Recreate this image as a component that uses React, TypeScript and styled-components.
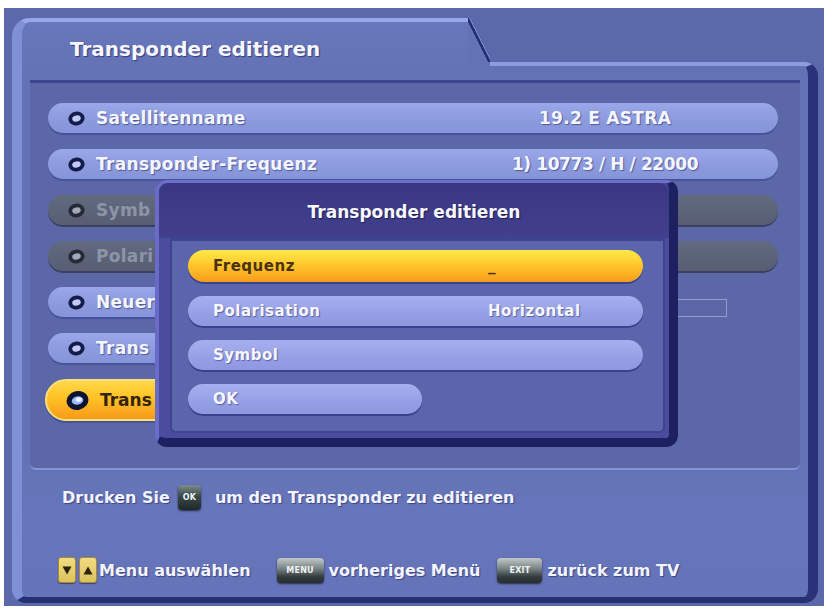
import React from "react";
import styled, { createGlobalStyle, css } from "styled-components";

const Global = createGlobalStyle`
  html, body { margin: 0; padding: 0; background: #ffffff; }
  body { font-family: "DejaVu Sans", "Liberation Sans", sans-serif; }
  #root { width: 828px; height: 615px; overflow: hidden; }
`;

const FILL = "#6371b5";

const Screen = styled.div`
  position: relative;
  box-sizing: border-box;
  width: 820px;
  height: 598px;
  margin: 8px 0 0 4px;
  padding: 10px 6px 3px 8px;
  background: #5b69ab;
  display: flex;
  flex-direction: column;
`;

const FrameHead = styled.div`
  display: flex;
  height: 62px;
  flex: none;
`;

const Tab = styled.div`
  box-sizing: border-box;
  width: 456px;
  background: linear-gradient(#6877bb, ${FILL});
  border-top: 4px solid #98a6ea;
  border-left: 10px solid #8090d7;
  border-top-left-radius: 18px;
  padding: 15px 0 0 48px;
  color: #f6f7ff;
  font-size: 20px;
  font-weight: bold;
  line-height: 24px;
  text-shadow: 1px 1px 1px rgba(30, 36, 96, 0.7);
`;

const SlantCol = styled.div`
  width: 22px;
  display: flex;
  flex-direction: column;
`;

const SlantTri = styled.div`
  height: 44px;
  background: linear-gradient(
    to bottom left,
    transparent calc(50% - 2px),
    #8d9be0 calc(50% - 1.5px),
    #243076 calc(50% - 0.5px),
    #243076 calc(50% + 1.5px),
    ${FILL} calc(50% + 2px)
  );
`;

const SlantFoot = styled.div`
  flex: 1;
  background: ${FILL};
`;

const HeadRest = styled.div`
  box-sizing: border-box;
  flex: 1;
  align-self: flex-end;
  height: 18px;
  background: ${FILL};
  border-top: 4px solid #8c9ae0;
  border-right: 10px solid #2a3379;
  border-top-right-radius: 14px;
`;

const Window = styled.div`
  box-sizing: border-box;
  flex: 1;
  display: flex;
  flex-direction: column;
  background: linear-gradient(${FILL} 70%, #6775ba 85%, #6573b8);
  border-left: 10px solid #8090d7;
  border-right: 10px solid #2a3379;
  border-bottom: 6px solid #273072;
  border-bottom-left-radius: 14px;
  border-bottom-right-radius: 14px;
  padding: 0 8px 14px 8px;
`;

const Panel = styled.div`
  box-sizing: border-box;
  height: 390px;
  flex: none;
  background: #5b67a7;
  border-top: 3px solid #3d478f;
  border-bottom: 2px solid #8594d6;
  border-radius: 0 0 6px 6px;
  padding: 20px 22px 0 18px;
  display: flex;
  flex-direction: column;
  gap: 16px;
`;

type Tone = "normal" | "grey" | "active";

const RowLine = styled.div`
  display: flex;
  align-items: center;
`;

const Pill = styled.div<{ $tone: Tone; $short?: boolean }>`
  box-sizing: border-box;
  display: flex;
  align-items: center;
  height: 30px;
  border-radius: 15px;
  padding-left: 20px;
  font-size: 17px;
  font-weight: bold;
  letter-spacing: 0.3px;
  ${(p) => (p.$short ? "width: 420px;" : "flex: 1;")}
  ${(p) =>
    p.$tone === "normal" &&
    css`
      background: linear-gradient(#9aa8ea, #8b99dd 60%, #8593d8);
      box-shadow: 0 2px 0 #46529c;
      color: #f4f6ff;
      text-shadow: 1px 1px 1px rgba(40, 48, 110, 0.6);
    `}
  ${(p) =>
    p.$tone === "grey" &&
    css`
      background: linear-gradient(#626a80, #575e72);
      box-shadow: 0 2px 0 #3b4060;
      color: #8e94a8;
    `}
  ${(p) =>
    p.$tone === "active" &&
    css`
      height: 42px;
      margin-left: -3px;
      border-radius: 21px;
      padding-left: 19px;
      letter-spacing: 0;
      background: linear-gradient(#ffd84a, #ffc126 45%, #f79a18);
      border: 2px solid #f7e27a;
      color: #34240c;
      box-shadow: 0 2px 0 #46529c;
    `}
`;

const Label = styled.span`
  flex: 1;
  margin-left: 11px;
  white-space: nowrap;
`;

const Value = styled.span<{ $tight?: boolean }>`
  width: 250px;
  margin-left: auto;
  margin-right: 48px;
  text-align: center;
  white-space: nowrap;
  letter-spacing: ${(p) => (p.$tight ? "-0.4px" : "0.3px")};
`;

const Field = styled.div`
  align-self: flex-end;
  margin-left: auto;
  margin-right: 51px;
  width: 100px;
  height: 18px;
  box-sizing: border-box;
  border: 1px solid rgba(160, 172, 226, 0.75);
`;

const Ring = ({ tone }: { tone: Tone }) => {
  const big = tone === "active";
  const ring = tone === "grey" ? "#262a36" : tone === "active" ? "#0e1430" : "#141c4a";
  const core = tone === "grey" ? "#a2a8b8" : tone === "active" ? "#9bbaff" : "#c0caf4";
  const w = big ? 23 : 17;
  const h = big ? 19 : 15;
  return (
    <svg width={w} height={h} viewBox="0 0 17 14" style={{ flex: "none" }}>
      <ellipse cx="8.5" cy="7" rx="6.2" ry="5" fill={core} stroke={ring} strokeWidth="3.8" transform="rotate(-12 8.5 7)" />
      <ellipse cx="9.4" cy="6.3" rx="2.2" ry="1.7" fill={tone === "active" ? "#eef4ff" : core} />
    </svg>
  );
};

const HintRow = styled.div`
  display: flex;
  align-items: center;
  height: 26px;
  margin-top: 14px;
  padding-left: 32px;
  color: #f2f4ff;
  font-size: 16px;
  font-weight: bold;
  text-shadow: 1px 1px 1px rgba(30, 36, 96, 0.6);
  white-space: nowrap;
`;

const FootRow = styled(HintRow)`
  margin-top: auto;
  padding-left: 28px;
`;

const Key = styled.span<{ $w: number; $ml: number; $mr: number; $dark?: boolean }>`
  display: inline-flex;
  align-items: center;
  justify-content: center;
  flex: none;
  width: ${(p) => p.$w}px;
  height: 25px;
  margin: 0 ${(p) => p.$mr}px 0 ${(p) => p.$ml}px;
  border-radius: 4px;
  background: ${(p) =>
    p.$dark
      ? "linear-gradient(#7d8c8c, #3a4848 45%, #1f2828)"
      : "linear-gradient(#c2c8c8, #7e8888 40%, #343c3e 75%, #262c2e)"};
  box-shadow: 0 1px 2px rgba(10, 14, 40, 0.7);
  color: #eef2f2;
  font-size: 8px;
  font-weight: bold;
  letter-spacing: 0.2px;
  text-shadow: none;
`;

const Arrow = styled.span<{ $mr: number }>`
  display: inline-flex;
  align-items: center;
  justify-content: center;
  flex: none;
  width: 18px;
  height: 26px;
  margin-right: ${(p) => p.$mr}px;
  box-sizing: border-box;
  border-radius: 3px;
  background: linear-gradient(#f2dc80, #dcc25e);
  border: 1px solid #a88a34;
  box-shadow: 0 1px 1px rgba(20, 20, 50, 0.5);
`;

const Dialog = styled.div`
  position: absolute;
  left: 151px;
  top: 172px;
  width: 523px;
  height: 267px;
  box-sizing: border-box;
  display: flex;
  flex-direction: column;
  background: #4a4c9e;
  border-top: 3px solid #6e6fcb;
  border-left: 4px solid #6a6bc6;
  border-right: 9px solid #1d2162;
  border-bottom: 9px solid #1d2162;
  border-radius: 12px;
`;

const DHead = styled.div`
  height: 55px;
  flex: none;
  display: flex;
  align-items: center;
  justify-content: center;
  padding-top: 2px;
  box-sizing: border-box;
  background: linear-gradient(#3a3782, #423f8e);
  border-radius: 9px 9px 0 0;
  color: #f6f7ff;
  font-size: 17px;
  font-weight: bold;
  text-shadow: 1px 1px 1px rgba(20, 20, 60, 0.7);
`;

const DBody = styled.div`
  flex: 1;
  margin: 0 4px 5px 11px;
  box-sizing: border-box;
  background: #5a65ab;
  border: 2px solid #40438e;
  border-top-width: 3px;
  border-radius: 0 0 6px 6px;
  padding: 9px 20px 0 16px;
  display: flex;
  flex-direction: column;
  gap: 14px;
`;

const DPill = styled.div<{ $active?: boolean; $w?: number }>`
  box-sizing: border-box;
  display: flex;
  align-items: center;
  height: ${(p) => (p.$active ? 32 : 30)}px;
  width: ${(p) => (p.$w ? `${p.$w}px` : "100%")};
  border-radius: 16px;
  padding-left: 25px;
  font-size: 15px;
  font-weight: bold;
  letter-spacing: 0.5px;
  ${(p) =>
    p.$active
      ? css`
          background: linear-gradient(#ffe84a, #ffc92c 45%, #f79c1c);
          color: #4a3210;
          box-shadow: 0 2px 0 #3a4290;
        `
      : css`
          background: linear-gradient(#a6b0ef, #959fe5 60%, #8f99e0);
          color: #f6f7ff;
          box-shadow: 0 2px 0 #3a4290;
          text-shadow: 1px 1px 1px rgba(40, 48, 110, 0.55);
        `}
`;

const DLabel = styled.span`
  width: 275px;
`;

const Tri = ({ up }: { up?: boolean }) => (
  <svg width="10" height="9" viewBox="0 0 10 9">
    <polygon points={up ? "5,0.5 9.5,8.5 0.5,8.5" : "0.5,0.5 9.5,0.5 5,8.5"} fill="#2a220e" />
  </svg>
);

export default function App() {
  return (
    <>
      <Global />
      <Screen>
        <FrameHead>
          <Tab>Transponder editieren</Tab>
          <SlantCol>
            <SlantTri />
            <SlantFoot />
          </SlantCol>
          <HeadRest />
        </FrameHead>
        <Window>
          <Panel>
            <RowLine>
              <Pill $tone="normal">
                <Ring tone="normal" />
                <Label>Satellitenname</Label>
                <Value>19.2 E ASTRA</Value>
              </Pill>
            </RowLine>
            <RowLine>
              <Pill $tone="normal">
                <Ring tone="normal" />
                <Label>Transponder-Frequenz</Label>
                <Value $tight>1) 10773 / H / 22000</Value>
              </Pill>
            </RowLine>
            <RowLine>
              <Pill $tone="grey">
                <Ring tone="grey" />
                <Label>Symb</Label>
              </Pill>
            </RowLine>
            <RowLine>
              <Pill $tone="grey">
                <Ring tone="grey" />
                <Label>Polari</Label>
              </Pill>
            </RowLine>
            <RowLine>
              <Pill $tone="normal" $short>
                <Ring tone="normal" />
                <Label>Neuer</Label>
              </Pill>
              <Field />
            </RowLine>
            <RowLine>
              <Pill $tone="normal" $short>
                <Ring tone="normal" />
                <Label>Trans</Label>
              </Pill>
            </RowLine>
            <RowLine>
              <Pill $tone="active" $short>
                <Ring tone="active" />
                <Label>Trans</Label>
              </Pill>
            </RowLine>
          </Panel>
          <HintRow>
            Drucken Sie
            <Key $w={23} $ml={8} $mr={14} $dark>
              OK
            </Key>
            um den Transponder zu editieren
          </HintRow>
          <FootRow>
            <Arrow $mr={3}>
              <Tri />
            </Arrow>
            <Arrow $mr={2}>
              <Tri up />
            </Arrow>
            Menu auswählen
            <Key $w={47} $ml={26} $mr={5}>
              MENU
            </Key>
            vorheriges Menü
            <Key $w={45} $ml={17} $mr={5}>
              EXIT
            </Key>
            zurück zum TV
          </FootRow>
        </Window>
        <Dialog>
          <DHead>Transponder editieren</DHead>
          <DBody>
            <DPill $active>
              <DLabel>Frequenz</DLabel>
              <span>_</span>
            </DPill>
            <DPill>
              <DLabel>Polarisation</DLabel>
              <span>Horizontal</span>
            </DPill>
            <DPill>
              <DLabel>Symbol</DLabel>
            </DPill>
            <DPill $w={234}>
              <DLabel>OK</DLabel>
            </DPill>
          </DBody>
        </Dialog>
      </Screen>
    </>
  );
}
